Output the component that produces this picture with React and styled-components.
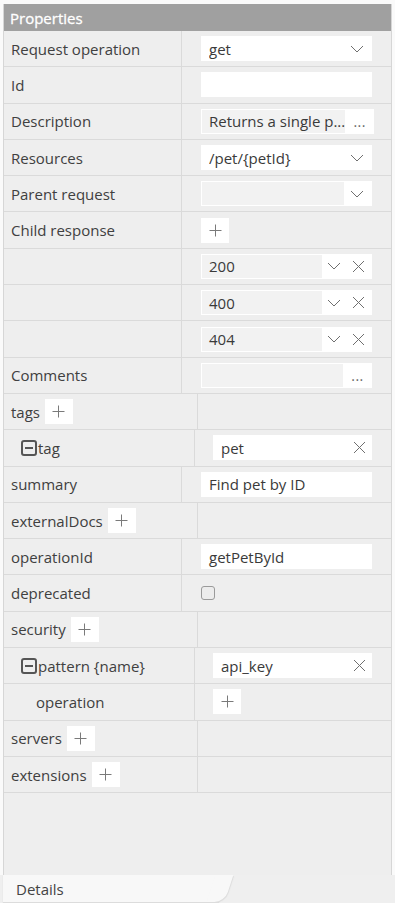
import React from "react";
import styled, { createGlobalStyle } from "styled-components";

const GlobalStyle = createGlobalStyle`
  * {
    margin: 0;
    padding: 0;
    box-sizing: border-box;
  }
  body {
    background: #fafafa;
    font-family: "Open Sans", "Noto Sans", sans-serif;
    font-size: 15px;
    color: #404040;
  }
`;

const Page = styled.div`
  width: 395px;
  height: 903px;
  display: flex;
  flex-direction: column;
  padding: 4px 3px 0 3px;
`;

const Panel = styled.div`
  flex: 1;
  display: flex;
  flex-direction: column;
  background: #eeeeee;
  border-left: 1px solid #d6d6d6;
  border-right: 1px solid #d6d6d6;
`;

const Header = styled.div`
  height: 27px;
  background: #a0a0a0;
  color: #ffffff;
  padding-left: 6px;
  display: flex;
  align-items: center;
  font-size: 15px;
  font-weight: 400;
  -webkit-text-stroke: 0.3px #ffffff;
`;

const Row = styled.div`
  height: 36.3px;
  display: flex;
  border-bottom: 1px solid #dadada;
`;

const Label = styled.div`
  width: ${(p) => p.$w}px;
  flex: none;
  border-right: 1px solid #dadada;
  display: flex;
  align-items: center;
  gap: 5px;
  padding-left: ${(p) => p.$indent || 7}px;
  white-space: nowrap;
`;

const Value = styled.div`
  flex: 1;
  display: flex;
  align-items: center;
  padding: 0 19px 0 ${(p) => p.$pl || 19}px;
`;

const Box = styled.div`
  flex: 1;
  height: 25px;
  background: #ffffff;
  display: flex;
  align-items: center;
  padding-left: ${(p) => p.$pl || 8}px;
  color: #3a3a3a;
`;

const Text = styled.span`
  flex: 1;
  white-space: nowrap;
  overflow: hidden;
`;

const Field = styled.div`
  flex: 1;
  height: 25px;
  background: #ffffff;
  display: flex;
  align-items: stretch;
  padding: 1px 0 1px 1px;
`;

const Inner = styled.div`
  flex: 1;
  background: #f2f2f2;
  display: flex;
  align-items: center;
  padding-left: 7px;
  color: #3a3a3a;
  white-space: nowrap;
  overflow: hidden;
`;

const IconBtn = styled.div`
  width: ${(p) => p.$w || 24}px;
  flex: none;
  display: flex;
  align-items: center;
  justify-content: center;
  background: #ffffff;
  color: #666;
  font-size: 14px;
  letter-spacing: 0.5px;
`;

const PlusBtn = styled.div`
  width: 28px;
  height: 25px;
  background: #ffffff;
  display: flex;
  align-items: center;
  justify-content: center;
  flex: none;
`;

const Check = styled.div`
  width: 14px;
  height: 14px;
  border: 1px solid #9a9a9a;
  border-radius: 3px;
  background: #ececec;
`;

const Filler = styled.div`
  flex: 1;
`;

const TabBar = styled.div`
  height: 28px;
  background: #efefef;
  margin: 0 -3px;
  padding-left: 3px;
  display: flex;
`;

const Tab = styled.div`
  position: relative;
  width: 216px;
  height: 27px;
  background: #f8f8f8;
  display: flex;
  align-items: center;
  padding-left: 13px;
  color: #444;
  box-shadow: 0 1px 1px #dcdcdc;
  &::after {
    content: "";
    position: absolute;
    top: 0;
    right: -10px;
    width: 18px;
    height: 27px;
    background: #f8f8f8;
    border-bottom-right-radius: 10px;
    transform: skewX(-18deg);
    box-shadow: 1px 1px 1px #dcdcdc;
  }
`;

const Chevron = () => (
  <svg width="14" height="8" viewBox="0 0 14 8">
    <path d="M1 1 L7 7 L13 1" fill="none" stroke="#6f6f6f" strokeWidth="1" />
  </svg>
);

const Cross = () => (
  <svg width="13" height="13" viewBox="0 0 13 13">
    <path d="M1 1 L12 12 M12 1 L1 12" fill="none" stroke="#6f6f6f" strokeWidth="1" />
  </svg>
);

const Plus = () => (
  <svg width="13" height="13" viewBox="0 0 13 13">
    <path d="M6.5 0.5 V12.5 M0.5 6.5 H12.5" fill="none" stroke="#7a7a7a" strokeWidth="1" />
  </svg>
);

const Minus = () => (
  <svg width="16" height="16" viewBox="0 0 16 16">
    <rect x="1" y="1" width="14" height="14" rx="2" fill="none" stroke="#555" strokeWidth="2" />
    <path d="M4 8 H12" stroke="#555" strokeWidth="2" />
  </svg>
);

const Select = ({ text }) => (
  <Box>
    <Text>{text}</Text>
    <IconBtn $w={30}>
      <Chevron />
    </IconBtn>
  </Box>
);

const Code = ({ text }) => (
  <Field>
    <Inner>{text}</Inner>
    <IconBtn $w={23}>
      <Chevron />
    </IconBtn>
    <IconBtn $w={27}>
      <Cross />
    </IconBtn>
  </Field>
);

const More = ({ text }) => (
  <Field>
    <Inner>{text}</Inner>
    <IconBtn $w={29}>...</IconBtn>
  </Field>
);

const Removable = ({ text }) => (
  <Box>
    <Text>{text}</Text>
    <IconBtn $w={26}>
      <Cross />
    </IconBtn>
  </Box>
);

const Section = ({ label }) => (
  <Row>
    <Label $w={194}>
      {label}
      <PlusBtn>
        <Plus />
      </PlusBtn>
    </Label>
    <Value />
  </Row>
);

export default function App() {
  return (
    <Page>
      <GlobalStyle />
      <Panel>
        <Header>Properties</Header>
        <Row>
          <Label $w={178}>Request operation</Label>
          <Value>
            <Select text="get" />
          </Value>
        </Row>
        <Row>
          <Label $w={178}>Id</Label>
          <Value>
            <Box />
          </Value>
        </Row>
        <Row>
          <Label $w={178}>Description</Label>
          <Value>
            <More text="Returns a single p..." />
          </Value>
        </Row>
        <Row>
          <Label $w={178}>Resources</Label>
          <Value>
            <Select text="/pet/{petId}" />
          </Value>
        </Row>
        <Row>
          <Label $w={178}>Parent request</Label>
          <Value>
            <Field style={{ paddingRight: 3 }}>
              <Inner />
              <IconBtn $w={25}>
                <Chevron />
              </IconBtn>
            </Field>
          </Value>
        </Row>
        <Row>
          <Label $w={178}>Child response</Label>
          <Value>
            <PlusBtn>
              <Plus />
            </PlusBtn>
          </Value>
        </Row>
        {["200", "400", "404"].map((c) => (
          <Row key={c}>
            <Label $w={178} />
            <Value>
              <Code text={c} />
            </Value>
          </Row>
        ))}
        <Row>
          <Label $w={178}>Comments</Label>
          <Value>
            <More text="" />
          </Value>
        </Row>
        <Section label="tags" />
        <Row>
          <Label $w={191} $indent={17}>
            <Minus />
            <span style={{ marginLeft: -4 }}>tag</span>
          </Label>
          <Value $pl={18}>
            <Removable text="pet" />
          </Value>
        </Row>
        <Row>
          <Label $w={178}>summary</Label>
          <Value>
            <Box>Find pet by ID</Box>
          </Value>
        </Row>
        <Section label="externalDocs" />
        <Row>
          <Label $w={178}>operationId</Label>
          <Value>
            <Box>getPetById</Box>
          </Value>
        </Row>
        <Row>
          <Label $w={178}>deprecated</Label>
          <Value>
            <Check />
          </Value>
        </Row>
        <Section label="security" />
        <Row>
          <Label $w={191} $indent={17}>
            <Minus />
            <span style={{ marginLeft: -4 }}>pattern {"{name}"}</span>
          </Label>
          <Value $pl={18}>
            <Removable text="api_key" />
          </Value>
        </Row>
        <Row>
          <Label $w={191} $indent={32}>
            operation
          </Label>
          <Value $pl={18}>
            <PlusBtn>
              <Plus />
            </PlusBtn>
          </Value>
        </Row>
        <Section label="servers" />
        <Section label="extensions" />
        <Filler />
      </Panel>
      <TabBar>
        <Tab>Details</Tab>
      </TabBar>
    </Page>
  );
}
